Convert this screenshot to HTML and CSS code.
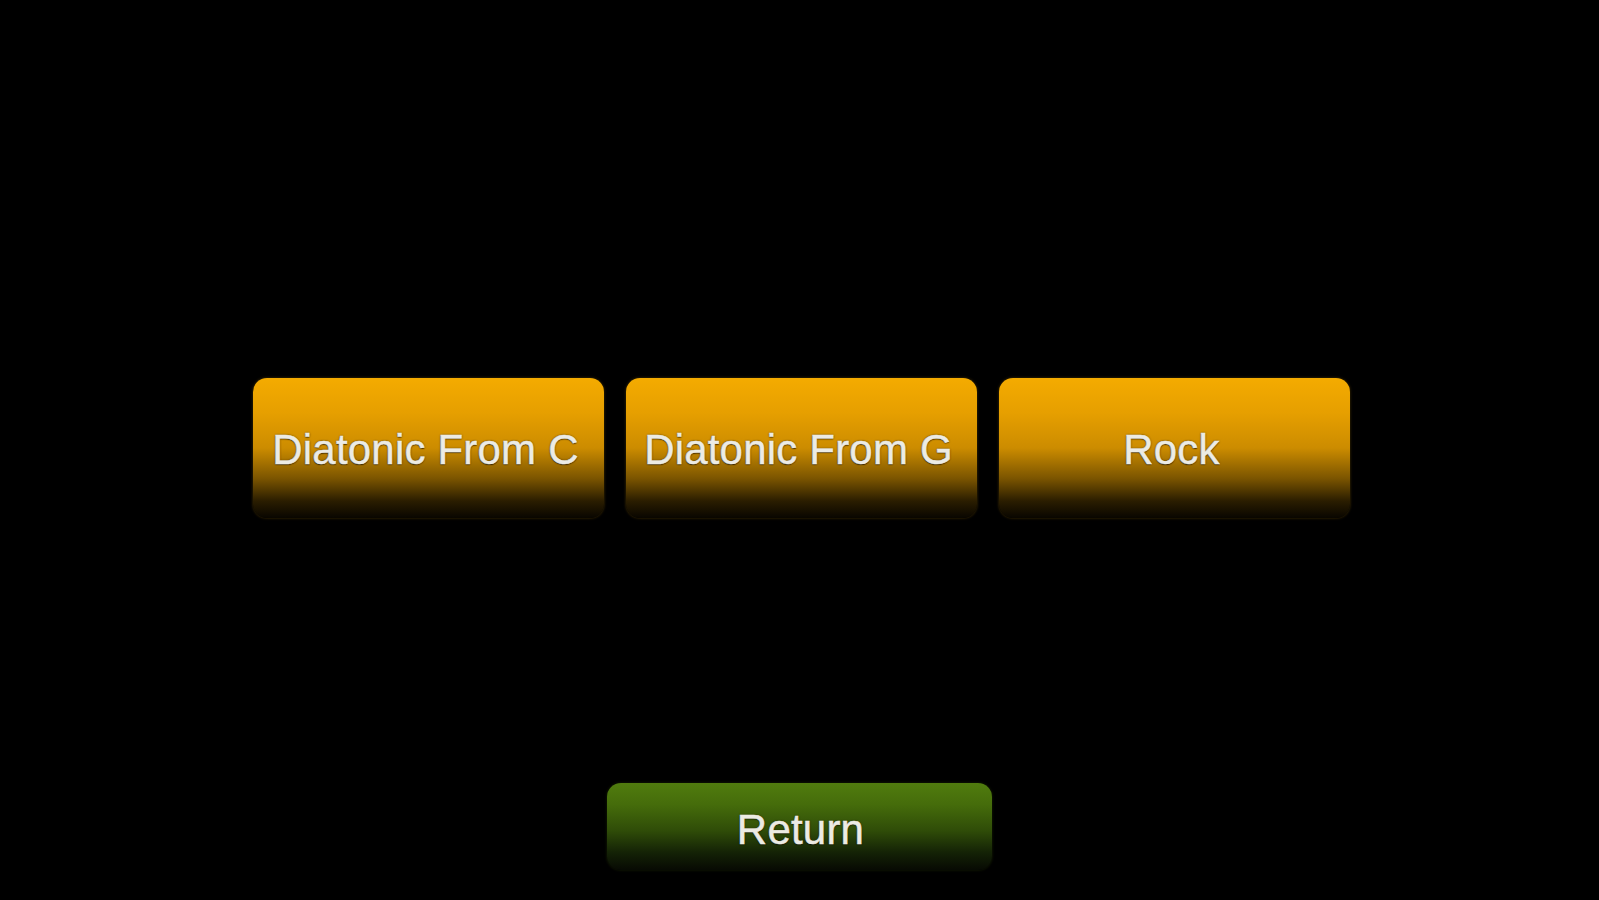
FILE: index.html
```html
<!DOCTYPE html>
<html>
<head>
<meta charset="utf-8">
<link rel="stylesheet" href="styles.css">
</head>
<body>
<main class="screen">
  <div class="choices">
    <button class="btn btn-orange">Diatonic From C</button>
    <button class="btn btn-orange">Diatonic From G</button>
    <button class="btn btn-orange">Rock</button>
  </div>
  <button class="btn btn-green">Return</button>
</main>
</body>
</html>
```
FILE: styles.css
```css
html, body {
  margin: 0;
  padding: 0;
  background: #000;
  width: 1599px;
  height: 900px;
  overflow: hidden;
}
.screen {
  display: flex;
  flex-direction: column;
  align-items: center;
  padding-top: 378px;
  box-sizing: border-box;
  height: 900px;
}
.choices {
  display: flex;
  gap: 22px;
  padding-left: 4px;
}
.btn {
  border: none;
  margin: 0;
  padding: 0;
  border-radius: 14px;
  font-family: "Liberation Sans", Arial, sans-serif;
  font-size: 42px;
  color: #ecebe4;
  -webkit-text-stroke: 0.5px #ecebe4;
  text-shadow: 0 0 2px rgba(40, 25, 0, 0.9), 0 1px 1px rgba(0, 0, 0, 0.6);
  display: flex;
  align-items: center;
  justify-content: center;
  letter-spacing: 0.2px;
}
.btn-orange {
  width: 351px;
  height: 140px;
  padding-top: 4px;
  padding-right: 6px;
  background: linear-gradient(to bottom,
    #f4ab00 0%,
    #e69f00 25%,
    #cc8c00 50%,
    #7a5400 72%,
    #2a1d00 88%,
    #090600 100%);
  box-shadow: 0 0 3px rgba(240, 170, 0, 0.3);
}
.btn-green {
  margin-top: 265px;
  width: 385px;
  height: 87px;
  padding-top: 6px;
  padding-left: 2px;
  background: linear-gradient(to bottom,
    #507c0e 0%,
    #456c0b 25%,
    #2f4c08 55%,
    #142206 80%,
    #070a03 100%);
  box-shadow: 0 0 3px rgba(80, 120, 10, 0.3);
}
```
